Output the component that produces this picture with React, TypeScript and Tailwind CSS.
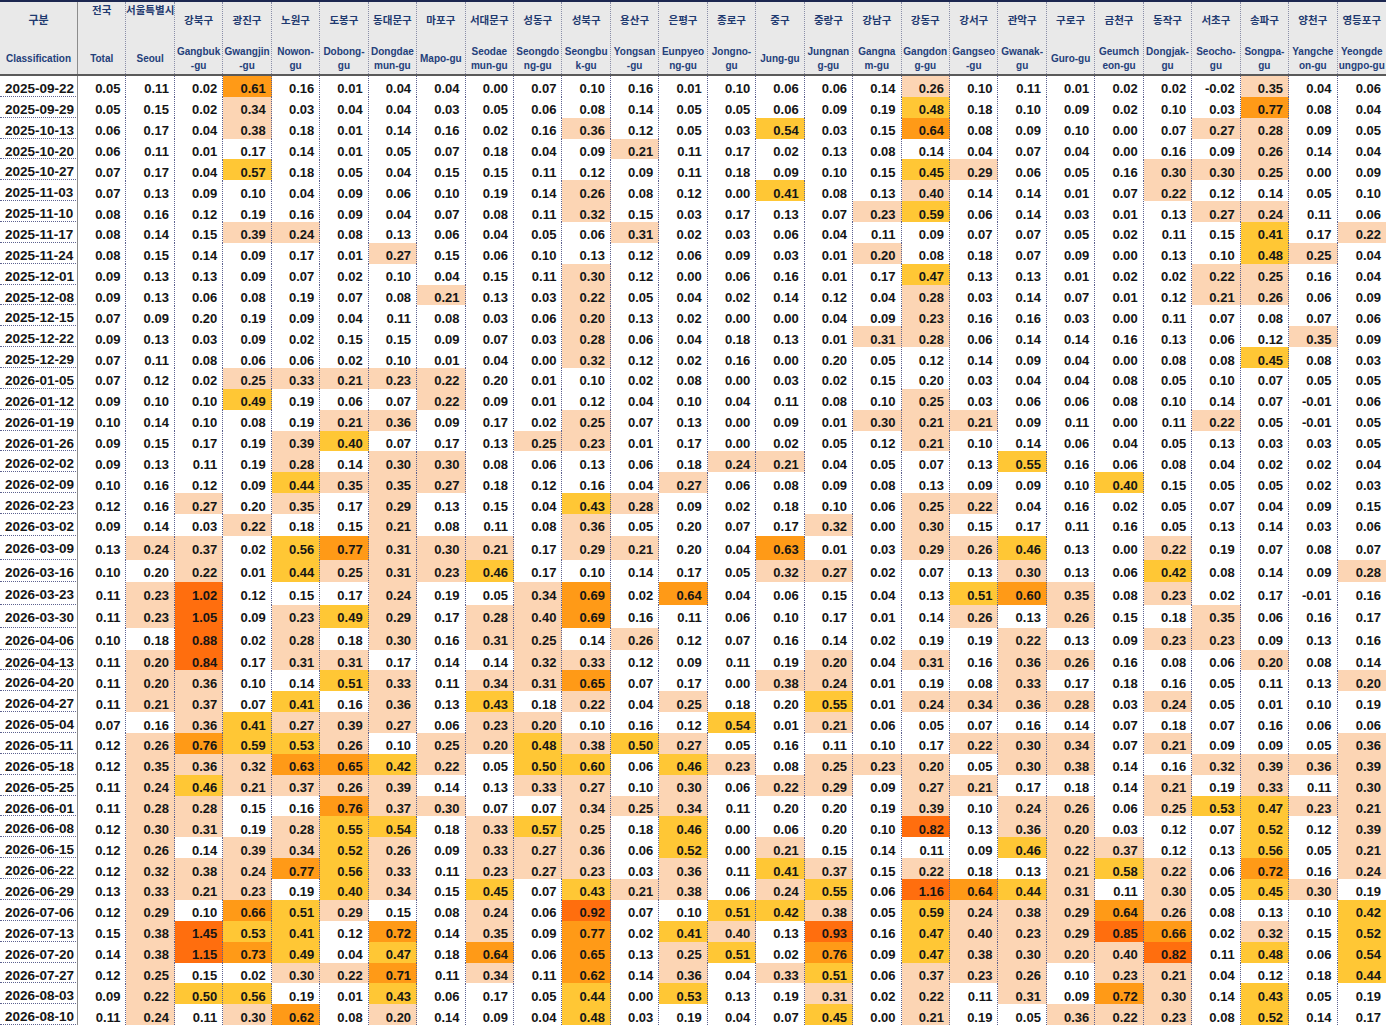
import React from "react";

const COLS: [string, string, boolean?][] = [
  ["전국", "Total", true],
  ["서울특별시", "Seoul", true],
  ["강북구", "Gangbuk\n-gu"],
  ["광진구", "Gwangjin\n-gu"],
  ["노원구", "Nowon-\ngu"],
  ["도봉구", "Dobong-\ngu"],
  ["동대문구", "Dongdae\nmun-gu"],
  ["마포구", "Mapo-gu"],
  ["서대문구", "Seodae\nmun-gu"],
  ["성동구", "Seongdo\nng-gu"],
  ["성북구", "Seongbu\nk-gu"],
  ["용산구", "Yongsan\n-gu"],
  ["은평구", "Eunpyeo\nng-gu"],
  ["종로구", "Jongno-\ngu"],
  ["중구", "Jung-gu"],
  ["중랑구", "Jungnan\ng-gu"],
  ["강남구", "Gangna\nm-gu"],
  ["강동구", "Gangdon\ng-gu"],
  ["강서구", "Gangseo\n-gu"],
  ["관악구", "Gwanak-\ngu"],
  ["구로구", "Guro-gu"],
  ["금천구", "Geumch\neon-gu"],
  ["동작구", "Dongjak-\ngu"],
  ["서초구", "Seocho-\ngu"],
  ["송파구", "Songpa-\ngu"],
  ["양천구", "Yangche\non-gu"],
  ["영등포구", "Yeongde\nungpo-gu"],
];

const DATA = `2025-09-22 0.05 0.11 0.02 0.61 0.16 0.01 0.04 0.04 0.00 0.07 0.10 0.16 0.01 0.10 0.06 0.06 0.14 0.26 0.10 0.11 0.01 0.02 0.02 -0.02 0.35 0.04 0.06
2025-09-29 0.05 0.15 0.02 0.34 0.03 0.04 0.04 0.03 0.05 0.06 0.08 0.14 0.05 0.05 0.06 0.09 0.19 0.48 0.18 0.10 0.09 0.02 0.10 0.03 0.77 0.08 0.04
2025-10-13 0.06 0.17 0.04 0.38 0.18 0.01 0.14 0.16 0.02 0.16 0.36 0.12 0.05 0.03 0.54 0.03 0.15 0.64 0.08 0.09 0.10 0.00 0.07 0.27 0.28 0.09 0.05
2025-10-20 0.06 0.11 0.01 0.17 0.14 0.01 0.05 0.07 0.18 0.04 0.09 0.21 0.11 0.17 0.02 0.13 0.08 0.14 0.04 0.07 0.04 0.00 0.16 0.09 0.26 0.14 0.04
2025-10-27 0.07 0.17 0.04 0.57 0.18 0.05 0.04 0.15 0.15 0.11 0.12 0.09 0.11 0.18 0.09 0.10 0.15 0.45 0.29 0.06 0.05 0.16 0.30 0.30 0.25 0.00 0.09
2025-11-03 0.07 0.13 0.09 0.10 0.04 0.09 0.06 0.10 0.19 0.14 0.26 0.08 0.12 0.00 0.41 0.08 0.13 0.40p 0.14 0.14 0.01 0.07 0.22 0.12 0.14 0.05 0.10
2025-11-10 0.08 0.16 0.12 0.19 0.16 0.09 0.04 0.07 0.08 0.11 0.32 0.15 0.03 0.17 0.13 0.07 0.23 0.59 0.06 0.14 0.03 0.01 0.13 0.27 0.24 0.11 0.06
2025-11-17 0.08 0.14 0.15 0.39 0.24 0.08 0.13 0.06 0.04 0.05 0.06 0.31 0.02 0.03 0.06 0.04 0.11 0.09 0.07 0.07 0.05 0.02 0.11 0.15 0.41 0.17 0.22
2025-11-24 0.08 0.15 0.14 0.09 0.17 0.01 0.27 0.15 0.06 0.10 0.13 0.12 0.06 0.09 0.03 0.01 0.20 0.08 0.18 0.07 0.09 0.00 0.13 0.10 0.48 0.25 0.04
2025-12-01 0.09 0.13 0.13 0.09 0.07 0.02 0.10 0.04 0.15 0.11 0.30 0.12 0.00 0.06 0.16 0.01 0.17 0.47 0.13 0.13 0.01 0.02 0.02 0.22 0.25 0.16 0.04
2025-12-08 0.09 0.13 0.06 0.08 0.19 0.07 0.08 0.21 0.13 0.03 0.22 0.05 0.04 0.02 0.14 0.12 0.04 0.28 0.03 0.14 0.07 0.01 0.12 0.21 0.26 0.06 0.09
2025-12-15 0.07 0.09 0.20w 0.19 0.09 0.04 0.11 0.08 0.03 0.06 0.20 0.13 0.02 0.00 0.00 0.04 0.09 0.23 0.16 0.16 0.03 0.00 0.11 0.07 0.08 0.07 0.06
2025-12-22 0.09 0.13 0.03 0.09 0.02 0.15 0.15 0.09 0.07 0.03 0.28 0.06 0.04 0.18 0.13 0.01 0.31 0.28 0.06 0.14 0.14 0.16 0.13 0.06 0.12 0.35 0.09
2025-12-29 0.07 0.11 0.08 0.06 0.06 0.02 0.10 0.01 0.04 0.00 0.32 0.12 0.02 0.16 0.00 0.20w 0.05 0.12 0.14 0.09 0.04 0.00 0.08 0.08 0.45 0.08 0.03
2026-01-05 0.07 0.12 0.02 0.25 0.33 0.21 0.23 0.22 0.20w 0.01 0.10 0.02 0.08 0.00 0.03 0.02 0.15 0.20w 0.03 0.04 0.04 0.08 0.05 0.10 0.07 0.05 0.05
2026-01-12 0.09 0.10 0.10 0.49 0.19 0.06 0.07 0.22 0.09 0.01 0.12 0.04 0.10 0.04 0.11 0.08 0.10 0.25 0.03 0.06 0.06 0.08 0.10 0.14 0.07 -0.01 0.06
2026-01-19 0.10 0.14 0.10 0.08 0.19 0.21 0.36 0.09 0.17 0.02 0.25 0.07 0.13 0.00 0.09 0.01 0.30 0.21 0.21 0.09 0.11 0.00 0.11 0.22 0.05 -0.01 0.05
2026-01-26 0.09 0.15 0.17 0.19 0.39 0.40 0.07 0.17 0.13 0.25 0.23 0.01 0.17 0.00 0.02 0.05 0.12 0.21 0.10 0.14 0.06 0.04 0.05 0.13 0.03 0.03 0.05
2026-02-02 0.09 0.13 0.11 0.19 0.28 0.14 0.30 0.30 0.08 0.06 0.13 0.06 0.18 0.24 0.21 0.04 0.05 0.07 0.13 0.55 0.16 0.06 0.08 0.04 0.02 0.02 0.04
2026-02-09 0.10 0.16 0.12 0.09 0.44 0.35 0.35 0.27 0.18 0.12 0.16 0.04 0.27 0.06 0.08 0.09 0.08 0.13 0.09 0.09 0.10 0.40 0.15 0.05 0.05 0.02 0.03
2026-02-23 0.12 0.16 0.27 0.20w 0.35 0.17 0.29 0.13 0.15 0.04 0.43 0.28 0.09 0.02 0.18 0.10 0.06 0.25 0.22 0.04 0.16 0.02 0.05 0.07 0.04 0.09 0.15
2026-03-02 0.09 0.14 0.03 0.22 0.18 0.15 0.21 0.08 0.11 0.08 0.36 0.05 0.20w 0.07 0.17 0.32 0.00 0.30 0.15 0.17 0.11 0.16 0.05 0.13 0.14 0.03 0.06
2026-03-09 0.13 0.24 0.37 0.02 0.56 0.77 0.31 0.30 0.21 0.17 0.29 0.21 0.20w 0.04 0.63 0.01 0.03 0.29 0.26 0.46 0.13 0.00 0.22 0.19 0.07 0.08 0.07
2026-03-16 0.10 0.20w 0.22 0.01 0.44 0.25 0.31 0.23 0.46 0.17 0.10 0.14 0.17 0.05 0.32 0.27 0.02 0.07 0.13 0.30 0.13 0.06 0.42 0.08 0.14 0.09 0.28
2026-03-23 0.11 0.23 1.02 0.12 0.15 0.17 0.24 0.19 0.05 0.34 0.69 0.02 0.64 0.04 0.06 0.15 0.04 0.13 0.51 0.60 0.35 0.08 0.23 0.02 0.17 -0.01 0.16
2026-03-30 0.11 0.23 1.05 0.09 0.23 0.49 0.29 0.17 0.28 0.40p 0.69 0.16 0.11 0.06 0.10 0.17 0.01 0.14 0.26 0.13 0.26 0.15 0.18 0.35 0.06 0.16 0.17
2026-04-06 0.10 0.18 0.88 0.02 0.28 0.18 0.30 0.16 0.31 0.25 0.14 0.26 0.12 0.07 0.16 0.14 0.02 0.19 0.19 0.22 0.13 0.09 0.23 0.23 0.09 0.13 0.16
2026-04-13 0.11 0.20 0.84 0.17 0.31 0.31 0.17 0.14 0.14 0.32 0.33 0.12 0.09 0.11 0.19 0.20 0.04 0.31 0.16 0.36 0.26 0.16 0.08 0.06 0.20 0.08 0.14
2026-04-20 0.11 0.20 0.36 0.10 0.14 0.51 0.33 0.11 0.34 0.31 0.65 0.07 0.17 0.00 0.38 0.24 0.01 0.19 0.08 0.33 0.17 0.18 0.16 0.05 0.11 0.13 0.20
2026-04-27 0.11 0.21 0.37 0.07 0.41 0.16 0.36 0.13 0.43 0.18 0.22 0.04 0.25 0.18 0.20w 0.55 0.01 0.24 0.34 0.36 0.28 0.03 0.24 0.05 0.01 0.10 0.19
2026-05-04 0.07 0.16 0.36 0.41 0.27 0.39 0.27 0.06 0.23 0.20 0.10 0.16 0.12 0.54 0.01 0.21 0.06 0.05 0.07 0.16 0.14 0.07 0.18 0.07 0.16 0.06 0.06
2026-05-11 0.12 0.26 0.76 0.59 0.53 0.26 0.10 0.25 0.20 0.48 0.38 0.50 0.27 0.05 0.16 0.11 0.10 0.17 0.22 0.30 0.34 0.07 0.21 0.09 0.09 0.05 0.36
2026-05-18 0.12 0.35 0.36 0.32 0.63 0.65 0.42 0.22 0.05 0.50 0.60y 0.06 0.46 0.23 0.08 0.25 0.23 0.20 0.05 0.30 0.38 0.14 0.16 0.32 0.39 0.36 0.39
2026-05-25 0.11 0.24 0.46 0.21 0.37 0.26 0.39 0.14 0.13 0.33 0.27 0.10 0.30 0.06 0.22 0.29 0.09 0.27 0.21 0.17 0.18 0.14 0.21 0.19 0.33 0.11 0.30
2026-06-01 0.11 0.28 0.28 0.15 0.16 0.76 0.37 0.30 0.07 0.07 0.34 0.25 0.34 0.11 0.20w 0.20w 0.19 0.39 0.10 0.24 0.26 0.06 0.25 0.53 0.47 0.23 0.21
2026-06-08 0.12 0.30 0.31 0.19 0.28 0.55 0.54 0.18 0.33 0.57 0.25 0.18 0.46 0.00 0.06 0.20w 0.10 0.82 0.13 0.36 0.20 0.03 0.12 0.07 0.52 0.12 0.39
2026-06-15 0.12 0.26 0.14 0.39 0.34 0.52 0.26 0.09 0.33 0.27 0.36 0.06 0.52 0.00 0.21 0.15 0.14 0.11 0.09 0.46 0.22 0.37 0.12 0.13 0.56 0.05 0.21
2026-06-22 0.12 0.32 0.38 0.24 0.77 0.56 0.33 0.11 0.23 0.27 0.23 0.03 0.36 0.11 0.41 0.37 0.15 0.22 0.18 0.13 0.21 0.58 0.22 0.06 0.72 0.16 0.24
2026-06-29 0.13 0.33 0.21 0.23 0.19 0.40 0.34 0.15 0.45 0.07 0.43 0.21 0.38 0.06 0.24 0.55 0.06 1.16 0.64 0.44 0.31 0.11 0.30 0.05 0.45 0.30 0.19
2026-07-06 0.12 0.29 0.10 0.66 0.51 0.29 0.15 0.08 0.24 0.06 0.92 0.07 0.10 0.51 0.42 0.38 0.05 0.59 0.24 0.38 0.29 0.64 0.26 0.08 0.13 0.10 0.42
2026-07-13 0.15 0.38 1.45 0.53 0.41 0.12 0.72 0.14 0.35 0.09 0.77 0.02 0.41 0.40p 0.13 0.93 0.16 0.47 0.40p 0.23 0.29 0.85 0.66 0.02 0.32 0.15 0.52
2026-07-20 0.14 0.38 1.15 0.73 0.49 0.04 0.47 0.18 0.64 0.06 0.65 0.13 0.25 0.51 0.02 0.76 0.09 0.47 0.38 0.30 0.20 0.40p 0.82 0.11 0.48 0.06 0.54
2026-07-27 0.12 0.25 0.15 0.02 0.30 0.22 0.71 0.11 0.34 0.11 0.62 0.14 0.36 0.04 0.33 0.51 0.06 0.37 0.23 0.26 0.10 0.23 0.21 0.04 0.12 0.18 0.44
2026-08-03 0.09 0.22 0.50 0.56 0.19 0.01 0.43 0.06 0.17 0.05 0.44 0.00 0.53 0.13 0.19 0.31 0.02 0.22 0.11 0.31 0.09 0.72 0.30 0.14 0.43 0.05 0.19
2026-08-10 0.11 0.24 0.11 0.30 0.62 0.08 0.20 0.14 0.09 0.04 0.48 0.03 0.19 0.04 0.07 0.45 0.00 0.21 0.19 0.05 0.36 0.22 0.23 0.08 0.52 0.14 0.17`;

const ROW_H: Record<string, string> = {
  "2026-03-02": "h-[22.3px]",
  "2026-03-09": "h-[23.3px]",
  "2026-03-16": "h-[22.6px]",
  "2026-03-23": "h-[22.7px]",
  "2026-03-30": "h-[22.7px]",
  "2026-04-06": "h-[22px]",
};

const BG: Record<string, string> = {
  w: "bg-white",
  p: "bg-[#fcd5b4]",
  y: "bg-[#ffc735]",
  o: "bg-[#ff9a17]",
  r: "bg-[#ff6e0e]",
};

function levelOf(v: number): string {
  if (v >= 0.8) return "r";
  if (v >= 0.6) return "o";
  if (v >= 0.4) return "y";
  if (v >= 0.2) return "p";
  return "w";
}

type Cell = { text: string; bg: string };
type Row = { date: string; cells: Cell[] };

const ROWS: Row[] = DATA.split("\n").map((line) => {
  const toks = line.trim().split(/\s+/);
  const date = toks[0];
  const cells = toks.slice(1).map((t) => {
    const m = t.match(/^(-?[\d.]+)([wpyor]?)$/);
    const text = m ? m[1] : t;
    const lvl = m && m[2] ? m[2] : levelOf(parseFloat(text));
    return { text, bg: BG[lvl] };
  });
  return { date, cells };
});

const GRID = "grid grid-cols-[78px_repeat(27,minmax(0,1fr))]";

function Header() {
  return (
    <div
      className={`${GRID} h-[76px] bg-[#e9e9e9] border-t-2 border-t-[#1c2750] border-b-2 border-b-[#5a5a5a]`}
    >
      <div className="flex flex-col border-r border-r-[#8c8c8c]">
        <div className="h-[40px] flex justify-center pt-[11px]">
          <span className="text-[11px] leading-[14px] font-bold text-[#1f3a70]">구분</span>
        </div>
        <div className="flex-1 flex items-center justify-center pt-[1px]">
          <span className="text-[10px] leading-[14px] font-bold text-[#24407a]">Classification</span>
        </div>
      </div>
      {COLS.map(([ko, en, top], i) => (
        <div
          key={ko}
          className={`flex flex-col min-w-0 overflow-hidden ${
            i < COLS.length - 1 ? "border-r border-dotted border-[#8a8ea8]" : ""
          }`}
        >
          <div className={`h-[40px] flex justify-center whitespace-nowrap ${top ? "pt-[1px]" : "pt-[11px]"}`}>
            <span className="text-[10.5px] leading-[14px] font-bold text-[#1f3a70]">{ko}</span>
          </div>
          <div className="flex-1 flex flex-col items-center justify-center pt-[1px]">
            {en.split("\n").map((l) => (
              <span
                key={l}
                className="text-[10px] leading-[14px] font-bold text-[#24407a] whitespace-nowrap"
              >
                {l}
              </span>
            ))}
          </div>
        </div>
      ))}
    </div>
  );
}

export default function App() {
  return (
    <div className="w-[1386px] h-[1025px] overflow-hidden bg-white font-['Liberation_Sans','Noto_Sans_CJK_KR',sans-serif] text-[#151515]">
      <Header />
      {ROWS.map((r) => (
        <div
          key={r.date}
          className={`${GRID} ${ROW_H[r.date] ?? "h-[20.87px]"} border-b border-dotted border-[#5d6290]`}
        >
          <div className="flex items-center pl-[5px] pt-[3px] border-r border-r-[#8c8c8c] text-[13.5px] font-bold whitespace-nowrap">
            {r.date}
          </div>
          {r.cells.map((c, i) => (
            <div
              key={i}
              className={`flex items-center justify-end pr-[5px] pt-[3px] text-[13px] font-bold ${c.bg} ${
                i < r.cells.length - 1 ? "border-r border-dotted border-[#5d6290]" : ""
              }`}
            >
              {c.text}
            </div>
          ))}
        </div>
      ))}
    </div>
  );
}
